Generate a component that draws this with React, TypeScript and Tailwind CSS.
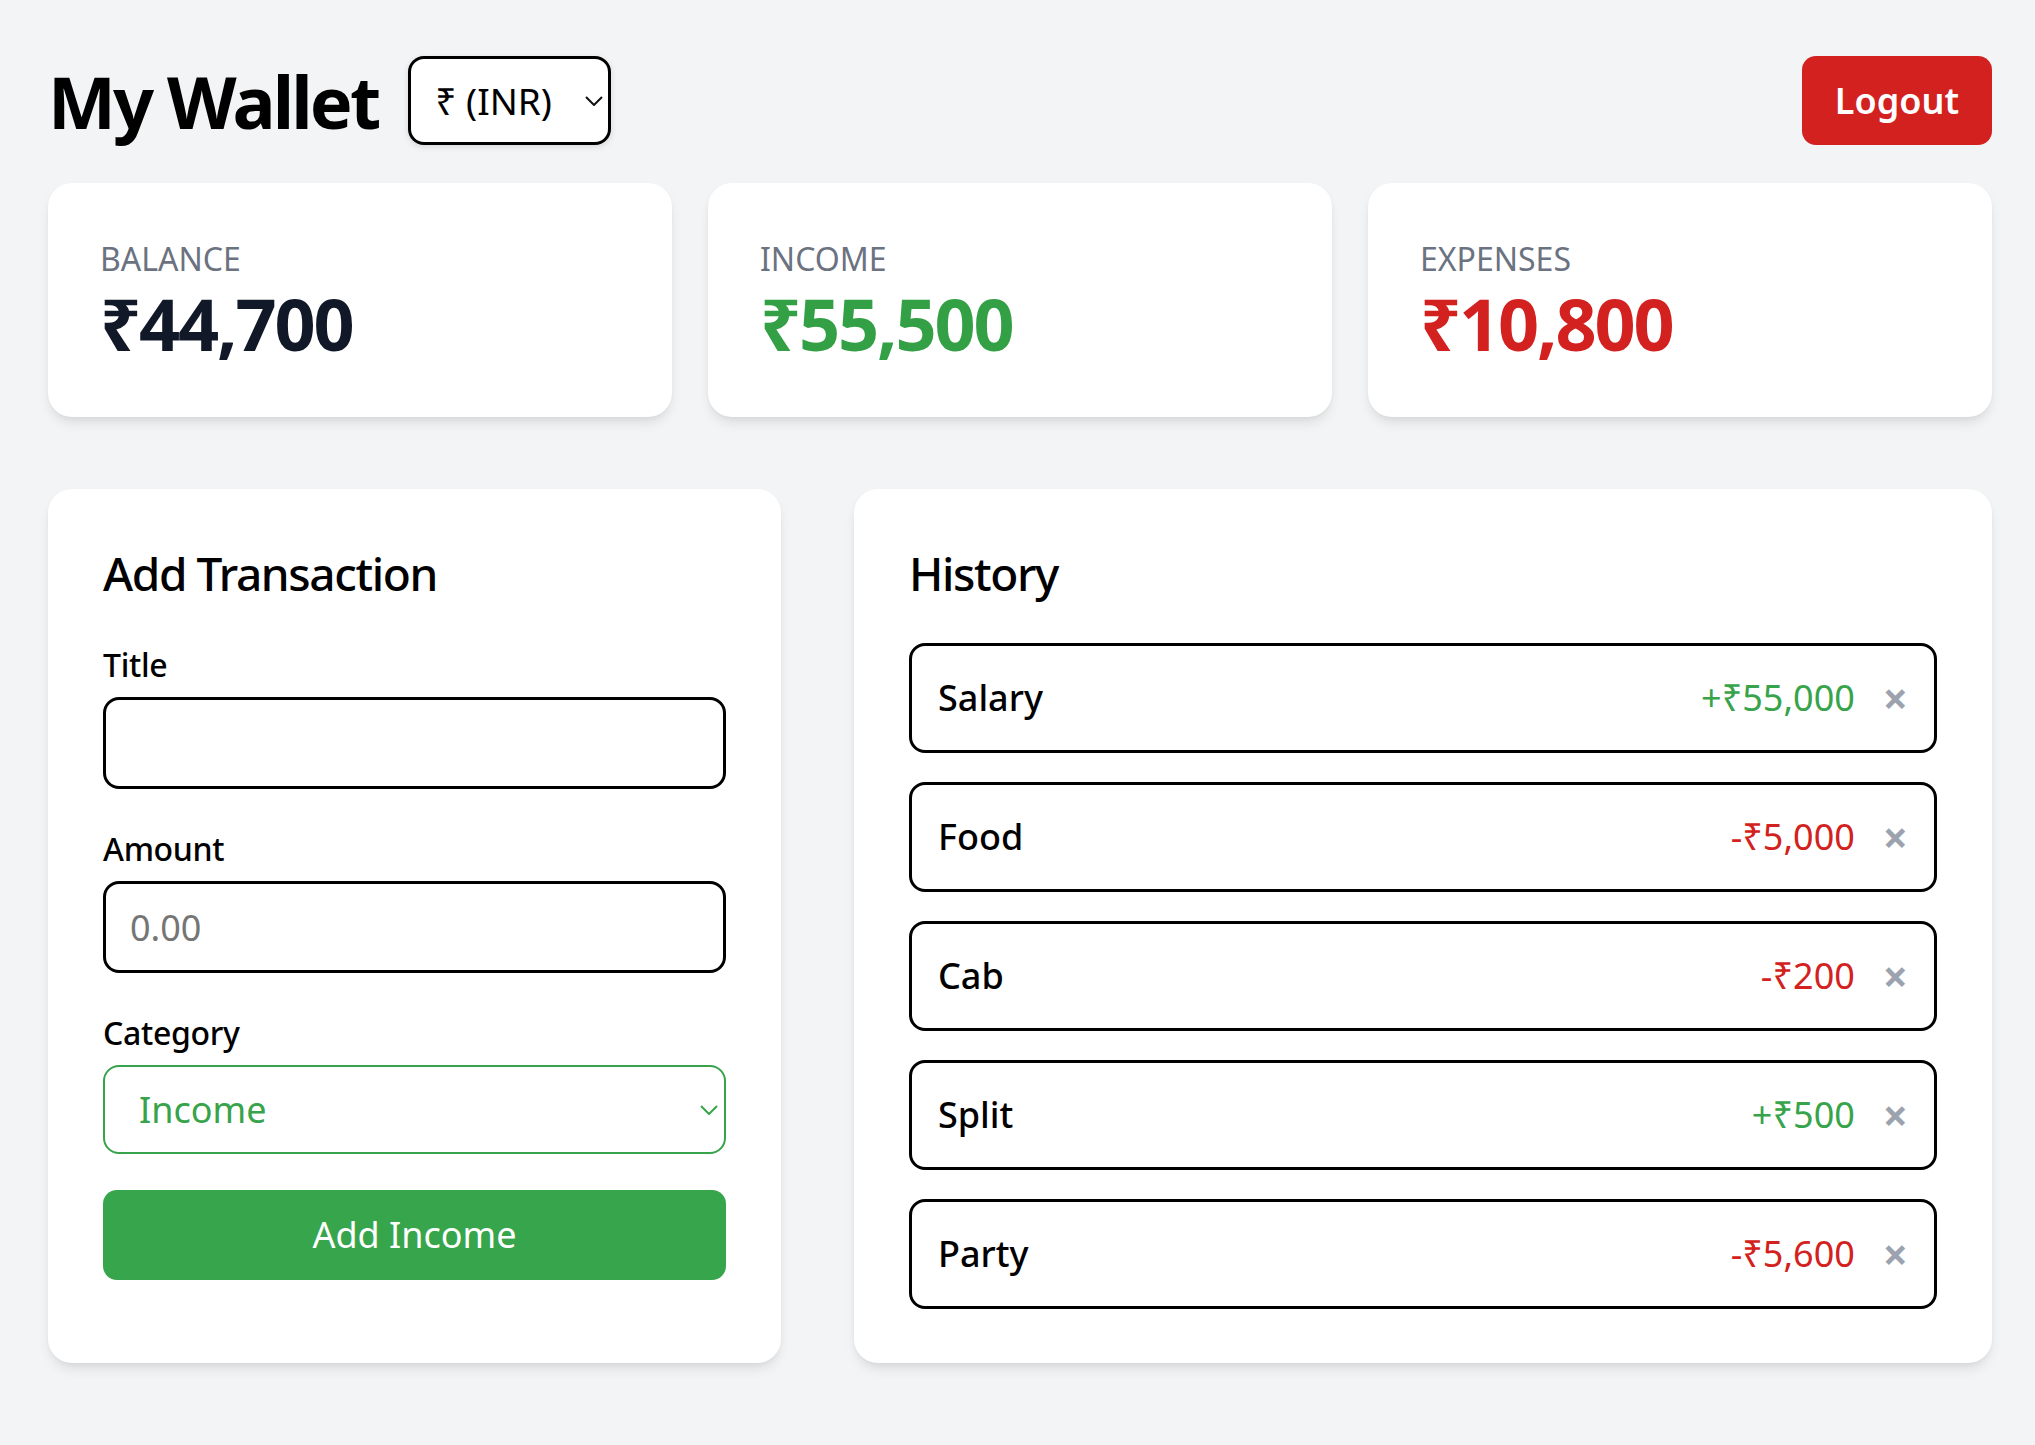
import { useState } from "react";

type Tx = { id: number; title: string; amount: number };

const history: Tx[] = [
  { id: 1, title: "Salary", amount: 55000 },
  { id: 2, title: "Food", amount: -5000 },
  { id: 3, title: "Cab", amount: -200 },
  { id: 4, title: "Split", amount: 500 },
  { id: 5, title: "Party", amount: -5600 },
];

const fmt = (n: number) => "₹" + Math.abs(n).toLocaleString("en-IN");

function Chevron({ color }: { color: string }) {
  return (
    <svg
      width="18"
      height="10"
      viewBox="0 0 18 10"
      fill="none"
      className="pointer-events-none absolute right-[8px] top-1/2 -translate-y-1/2"
    >
      <polyline points="1,1 9,9 17,1" stroke={color} strokeWidth="2" />
    </svg>
  );
}

export default function App() {
  const [category, setCategory] = useState("income");

  return (
    <div className="min-h-screen bg-[#f3f4f6] pl-[48px] pr-[43px] pt-[56px] pb-[48px] font-['Noto_Sans',sans-serif] text-black">

      {/* Header */}
      <header className="flex h-[89px] items-center justify-between">
        <div className="flex items-center gap-[30px]">
          <h1 className="text-[72px] leading-[80px] font-bold tracking-[-0.04em]">My Wallet</h1>
          <div className="relative">
            <select className="h-[89px] w-[203px] appearance-none rounded-[16px] border-[3px] border-black bg-white pl-[24px] text-[37px] shadow-[0_2px_6px_rgba(0,0,0,0.12)] outline-none">
              <option>₹ (INR)</option>
              <option>$ (USD)</option>
              <option>€ (EUR)</option>
            </select>
            <Chevron color="#111" />
          </div>
        </div>
        <button className="h-[89px] rounded-[14px] bg-[#d32120] px-[33px] text-[36px] font-semibold text-white">
          Logout
        </button>
      </header>

      {/* Summary cards */}
      <div className="mt-[38px] grid grid-cols-3 gap-[36px]">
        {[
          { label: "BALANCE", value: 44700, color: "text-[#111827]" },
          { label: "INCOME", value: 55500, color: "text-[#34a046]" },
          { label: "EXPENSES", value: 10800, color: "text-[#d32120]" },
        ].map((c) => (
          <div
            key={c.label}
            className="rounded-[24px] bg-white px-[52px] pt-[52px] pb-[54px] shadow-[0_8px_14px_-4px_rgba(0,0,0,0.12),0_2px_6px_-2px_rgba(0,0,0,0.06)]"
          >
            <p className="text-[32px] leading-[48px] text-[#6b7280]">{c.label}</p>
            <p className={`text-[72px] leading-[80px] font-bold tracking-[-0.03em] ${c.color}`}>{fmt(c.value)}</p>
          </div>
        ))}
      </div>

      {/* Form + history */}
      <div className="mt-[72px] grid grid-cols-[733px_1fr] gap-[73px]">

        {/* Add Transaction */}
        <div className="flex flex-col gap-[36px] rounded-[24px] bg-white px-[55px] pt-[52px] pb-[54px] shadow-[0_8px_14px_-4px_rgba(0,0,0,0.12),0_2px_6px_-2px_rgba(0,0,0,0.06)]">
          <h2 className="text-[46px] leading-[64px] font-medium tracking-[-0.03em]">Add Transaction</h2>

          <div>
            <label className="block text-[32px] leading-[48px] font-medium tracking-[-0.01em]">Title</label>
            <input
              type="text"
              className="mt-[8px] block h-[92px] w-full rounded-[16px] border-[3px] border-black bg-white px-[24px] text-[36px] outline-none"
            />
          </div>

          <div>
            <label className="block text-[32px] leading-[48px] font-medium tracking-[-0.01em]">Amount</label>
            <input
              type="number"
              placeholder="0.00"
              className="mt-[8px] block h-[92px] w-full rounded-[16px] border-[3px] border-black bg-white px-[24px] text-[36px] outline-none placeholder:text-[#757575]"
            />
          </div>

          <div>
            <label className="block text-[32px] leading-[48px] font-medium tracking-[-0.01em]">Category</label>
            <div className="relative mt-[8px]">
              <select
                value={category}
                onChange={(e) => setCategory(e.target.value)}
                className="block h-[89px] w-full appearance-none rounded-[16px] border-2 border-[#37a34a] bg-white pl-[34px] text-[36px] text-[#37a34a] outline-none"
              >
                <option value="income">Income</option>
                <option value="expense">Expense</option>
              </select>
              <Chevron color="#37a34a" />
            </div>
          </div>

          <button className="h-[90px] w-full rounded-[14px] bg-[#37a54b] text-[36px] text-white">
            Add Income
          </button>
        </div>

        {/* History */}
        <div className="rounded-[24px] bg-white px-[55px] pt-[52px] pb-[54px] shadow-[0_8px_14px_-4px_rgba(0,0,0,0.12),0_2px_6px_-2px_rgba(0,0,0,0.06)]">
          <h2 className="mb-[38px] text-[46px] leading-[64px] font-medium tracking-[-0.03em]">History</h2>
          <ul className="flex flex-col gap-[29px]">
            {history.map((t) => (
              <li
                key={t.id}
                className="flex h-[110px] items-center justify-between rounded-[16px] border-[3px] border-black px-[26px]"
              >
                <span className="text-[36px] font-medium">{t.title}</span>
                <div className="flex items-center gap-[28px]">
                  <span className={`text-[36px] ${t.amount > 0 ? "text-[#37a34a]" : "text-[#d32120]"}`}>
                    {t.amount > 0 ? "+" : "-"}
                    {fmt(t.amount)}
                  </span>
                  <button className="text-[44px] leading-none font-bold text-[#9ca3af]">×</button>
                </div>
              </li>
            ))}
          </ul>
        </div>
      </div>
    </div>
  );
}
